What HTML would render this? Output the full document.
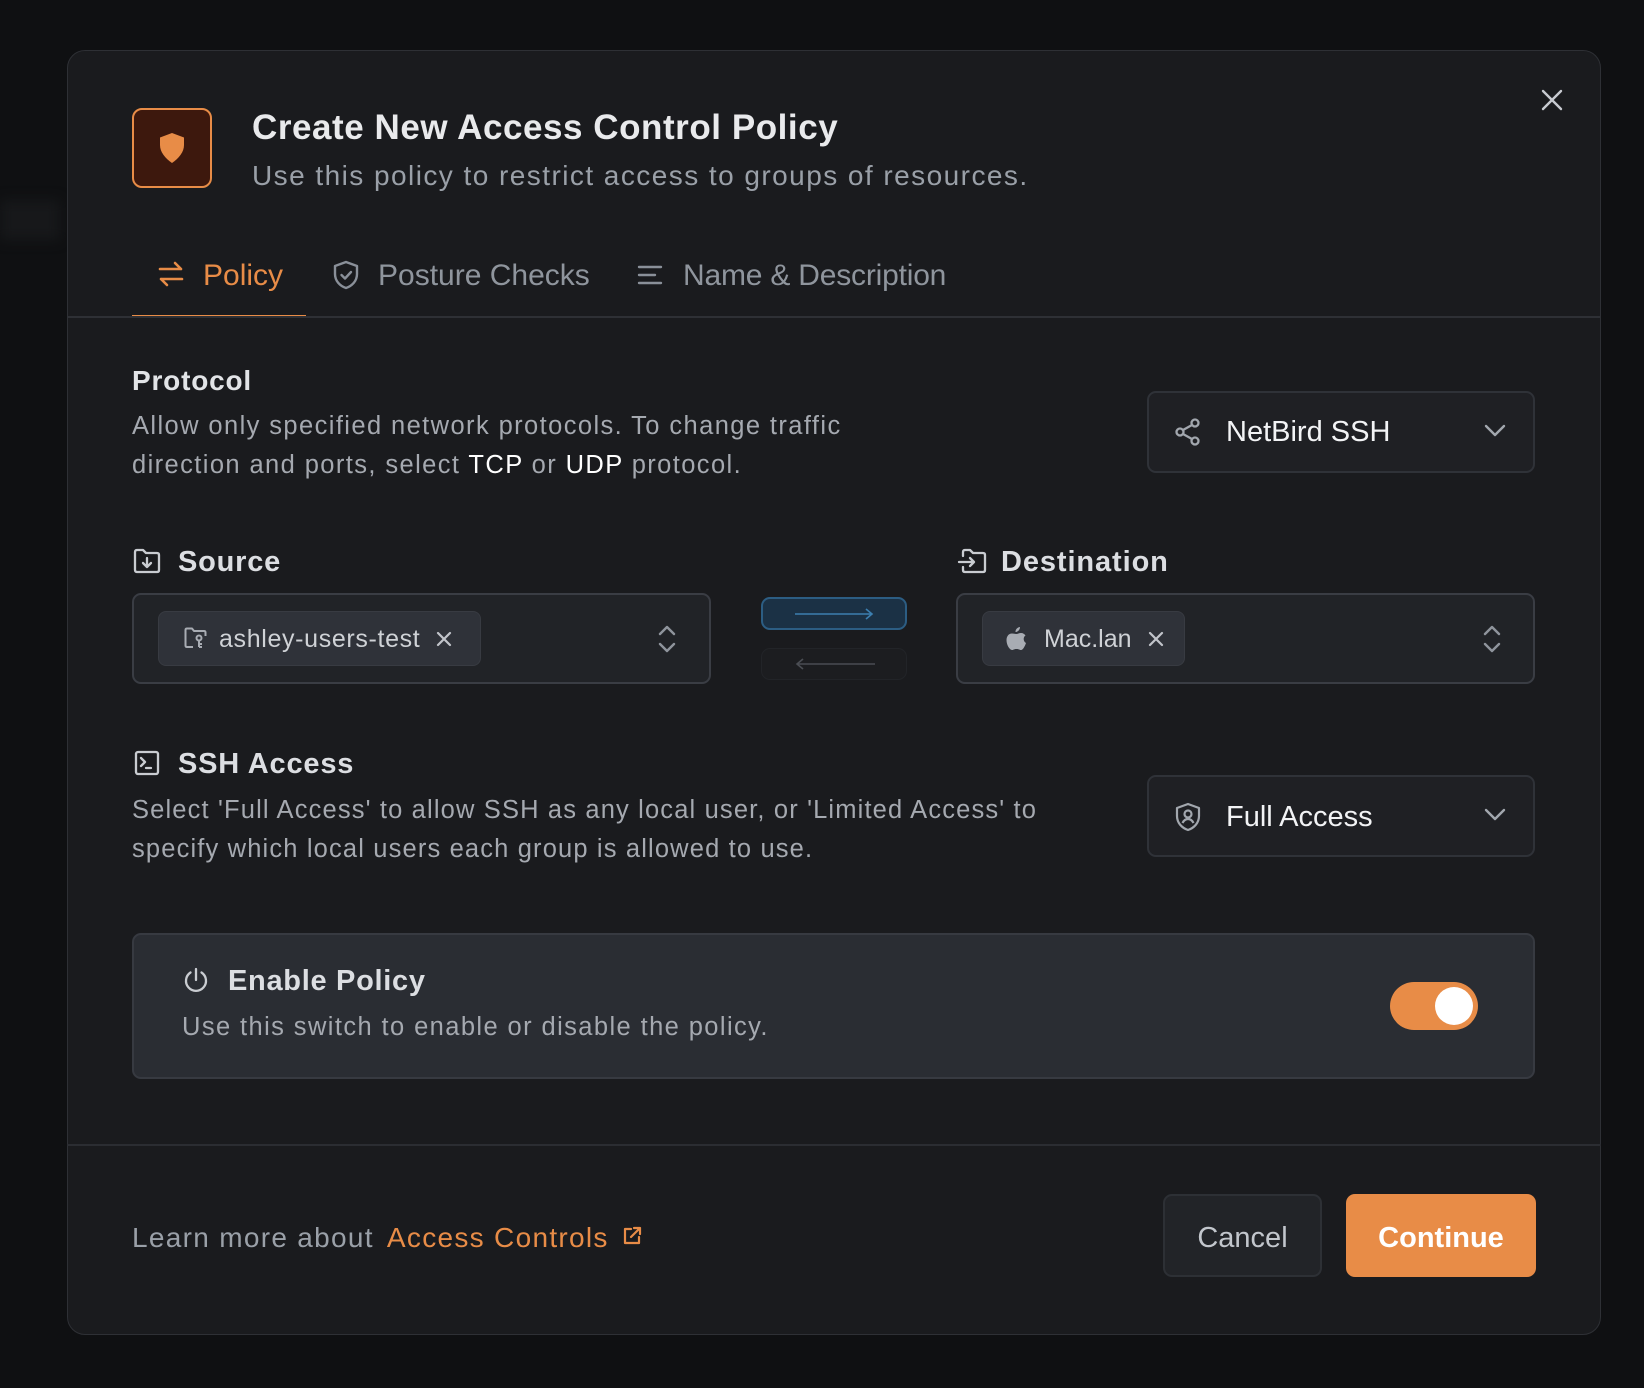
<!DOCTYPE html>
<html><head><meta charset="utf-8"><style>
*{box-sizing:border-box;margin:0;padding:0}
html,body{width:1644px;height:1388px;background:#0f1012;overflow:hidden;font-family:"Liberation Sans",sans-serif}
.abs{position:absolute}
.modal{position:absolute;left:67px;top:50px;width:1534px;height:1285px;background:#1a1b1e;border:1.5px solid #2e3035;border-radius:18px}
.t{position:absolute;white-space:nowrap}
svg{position:absolute;overflow:visible}
.sel{position:absolute;background:#1f2024;border:2px solid #2f3238;border-radius:9px}
.muted{color:#a5a9b0}
</style></head><body>
<div class="abs" style="left:0;top:200px;width:60px;height:40px;background:#17181a;filter:blur(6px)"></div>
<div class="modal"></div>

<svg style="left:1542px;top:90px" width="20" height="20"><path d="M1 1L19 19M19 1L1 19" stroke="#c7cad0" stroke-width="2.4" stroke-linecap="round"/></svg>

<div class="abs" style="left:132px;top:108px;width:80px;height:80px;border:2px solid #e88c47;border-radius:10px;background:#3d180d"></div>
<svg style="left:158px;top:132px" width="28" height="32" viewBox="0 0 28 32"><path d="M14 1L26 5.5V13C26 20 21 26 14 31C7 26 2 20 2 13V5.5Z" fill="#e88c47"/></svg>

<div class="t" style="left:252px;top:108px;font-size:35px;font-weight:bold;color:#e9eaec;letter-spacing:0.55px">Create New Access Control Policy</div>
<div class="t muted" style="left:252px;top:160px;font-size:28px;color:#9aa0a8;letter-spacing:1.45px">Use this policy to restrict access to groups of resources.</div>

<svg style="left:157px;top:260px" width="28" height="28" viewBox="0 0 28 28" fill="none" stroke="#e88c47" stroke-width="2.6" stroke-linecap="round" stroke-linejoin="round"><path d="M3 9H24M18 3L24 9M25 19H4M10 25L4 19"/></svg>
<div class="t" style="left:203px;top:259px;font-size:30px;color:#e88c47">Policy</div>
<div class="abs" style="left:132px;top:315px;width:174px;height:3px;background:#e88c47"></div>
<div class="abs" style="left:67px;top:316px;width:1534px;height:2px;background:#2e3035"></div>
<svg style="left:333px;top:260px" width="26" height="30" viewBox="0 0 26 30" fill="none" stroke="#8a9099" stroke-width="2.4" stroke-linejoin="round" stroke-linecap="round"><path d="M13 2L24 6V14C24 21 19 26 13 28C7 26 2 21 2 14V6Z"/><path d="M8.5 15L12 18.5L18 12"/></svg>
<div class="t" style="left:378px;top:259px;font-size:30px;color:#8f959d">Posture Checks</div>
<svg style="left:637px;top:264px" width="26" height="22" fill="none" stroke="#8a9099" stroke-width="2.4" stroke-linecap="round"><path d="M2 3H24M2 11H18M2 19H24"/></svg>
<div class="t" style="left:683px;top:259px;font-size:30px;color:#8f959d;letter-spacing:-0.2px">Name &amp; Description</div>

<div class="t" style="left:132px;top:365px;font-size:28px;font-weight:bold;color:#e2e4e7;letter-spacing:0.8px">Protocol</div>
<div class="t muted" style="left:132px;top:407px;font-size:25.5px;line-height:39px;letter-spacing:1.4px">Allow only specified network protocols. To change traffic<br>direction and ports, select <span style="color:#fff">TCP</span> or <span style="color:#fff">UDP</span> protocol.</div>
<div class="sel" style="left:1147px;top:391px;width:388px;height:82px"></div>
<svg style="left:1174px;top:418px" width="28" height="28" viewBox="0 0 28 28" fill="none" stroke="#a2a7ae" stroke-width="2.3"><circle cx="21" cy="5" r="3.5"/><circle cx="6" cy="14" r="3.5"/><circle cx="21" cy="23" r="3.5"/><path d="M9 12L18 7M9 16L18 21"/></svg>
<div class="t" style="left:1226px;top:416px;font-size:29px;color:#f2f3f5">NetBird SSH</div>
<svg style="left:1484px;top:424px" width="22" height="14" fill="none" stroke="#a2a7ae" stroke-width="2.4" stroke-linecap="round" stroke-linejoin="round"><path d="M2 2L11 11L20 2"/></svg>

<svg style="left:133px;top:548px" width="28" height="26" viewBox="0 0 28 26" fill="none" stroke="#c9ccd1" stroke-width="2.3" stroke-linejoin="round" stroke-linecap="round"><path d="M2 4C2 2.5 3 2 4 2H10L13 5H24C25.5 5 26 6 26 7V22C26 23.5 25 24 24 24H4C3 24 2 23.5 2 22Z"/><path d="M14 10V19M10 15L14 19L18 15"/></svg>
<div class="t" style="left:178px;top:546px;font-size:29px;font-weight:bold;color:#dcdee2;letter-spacing:0.8px">Source</div>
<div class="sel" style="left:132px;top:593px;width:579px;height:91px;background:#212327;border-color:#3a3d44"></div>
<div class="abs" style="left:158px;top:611px;width:323px;height:55px;background:#2f3239;border:1px solid #383b42;border-radius:8px"></div>
<svg style="left:184px;top:627px" width="24" height="22" viewBox="0 0 24 22" fill="none" stroke="#a8acb3" stroke-width="2" stroke-linejoin="round"><path d="M9 20H3C2 20 1.5 19.5 1.5 18.5V3C1.5 2 2 1.5 3 1.5H8L10 4H20C21 4 21.5 4.5 21.5 5.5V9"/><circle cx="15" cy="11" r="2.5"/><path d="M15 14V20M15 17H18M15 20H18"/></svg>
<div class="t" style="left:219px;top:625px;font-size:25px;color:#cfd2d6;letter-spacing:0.65px">ashley-users-test</div>
<svg style="left:437px;top:632px" width="14" height="14" fill="none" stroke="#c1c4ca" stroke-width="2.2" stroke-linecap="round"><path d="M1 1L13 13M13 1L1 13"/></svg>
<svg style="left:658px;top:625px" width="18" height="28" fill="none" stroke="#8f949c" stroke-width="2.4" stroke-linecap="round" stroke-linejoin="round"><path d="M2 9L9 2L16 9M2 19L9 26L16 19"/></svg>

<div class="abs" style="left:761px;top:597px;width:146px;height:33px;background:#1b3145;border:2px solid #2c5d83;border-radius:9px"></div>
<svg style="left:795px;top:608px" width="80" height="12" fill="none" stroke="#3c7fb0" stroke-width="1.6"><path d="M0 6H77M71 1L77 6L71 11"/></svg>
<div class="abs" style="left:761px;top:648px;width:146px;height:32px;background:#1c1d20;border:1.5px solid #222428;border-radius:9px"></div>
<svg style="left:795px;top:658px" width="80" height="12" fill="none" stroke="#4a4d53" stroke-width="1.6"><path d="M80 6H2M8 1L2 6L8 11"/></svg>

<svg style="left:957px;top:548px" width="30" height="26" viewBox="0 0 30 26" fill="none" stroke="#c9ccd1" stroke-width="2.3" stroke-linejoin="round" stroke-linecap="round"><path d="M6 8V4C6 2.5 7 2 8 2H13L16 5H26C27.5 5 28 6 28 7V22C28 23.5 27 24 26 24H8C7 24 6 23.5 6 22V19"/><path d="M2 14H17M13 10L17 14L13 18"/></svg>
<div class="t" style="left:1001px;top:546px;font-size:29px;font-weight:bold;color:#dcdee2;letter-spacing:0.9px">Destination</div>
<div class="sel" style="left:956px;top:593px;width:579px;height:91px;background:#212327;border-color:#3a3d44"></div>
<div class="abs" style="left:982px;top:611px;width:203px;height:55px;background:#2f3239;border:1px solid #383b42;border-radius:8px"></div>
<svg style="left:1005px;top:626px" width="22" height="26" viewBox="0 0 22 26"><path d="M15 1C15 3.5 13 6 10.5 6C10.3 3.5 12.5 1.2 15 1Z" fill="#a8acb3"/><path d="M11 8C13 8 14 7 16 7C18 7 19.5 8 20.5 9.5C18 11 18 15.5 21 17C20 20 18 24 16 24C14.5 24 14 23 11.5 23C9 23 8.5 24 7 24C5 24 1.5 19.5 1.5 14C1.5 10 4 7.5 7 7.5C9 7.5 10 8 11 8Z" fill="#a8acb3"/></svg>
<div class="t" style="left:1044px;top:625px;font-size:25px;color:#cfd2d6">Mac.lan</div>
<svg style="left:1149px;top:632px" width="14" height="14" fill="none" stroke="#c1c4ca" stroke-width="2.2" stroke-linecap="round"><path d="M1 1L13 13M13 1L1 13"/></svg>
<svg style="left:1483px;top:625px" width="18" height="28" fill="none" stroke="#8f949c" stroke-width="2.4" stroke-linecap="round" stroke-linejoin="round"><path d="M2 9L9 2L16 9M2 19L9 26L16 19"/></svg>

<svg style="left:134px;top:750px" width="26" height="26" fill="none" stroke="#c9ccd1" stroke-width="2.3" stroke-linejoin="round" stroke-linecap="round"><rect x="2" y="2" width="22" height="22" rx="2"/><path d="M7 8L11 12L7 16M12 18H17"/></svg>
<div class="t" style="left:178px;top:748px;font-size:29px;font-weight:bold;color:#dcdee2;letter-spacing:0.8px">SSH Access</div>
<div class="t muted" style="left:132px;top:791px;font-size:25.5px;line-height:39px;letter-spacing:1.15px">Select 'Full Access' to allow SSH as any local user, or 'Limited Access' to<br>specify which local users each group is allowed to use.</div>
<div class="sel" style="left:1147px;top:775px;width:388px;height:82px"></div>
<svg style="left:1175px;top:802px" width="26" height="30" viewBox="0 0 26 30" fill="none" stroke="#a2a7ae" stroke-width="2.2" stroke-linejoin="round"><path d="M13 2L24 6V14C24 21 19 26 13 28C7 26 2 21 2 14V6Z"/><circle cx="13" cy="12" r="3.5"/><path d="M7.5 21C9 18 11 17 13 17C15 17 17 18 18.5 21"/></svg>
<div class="t" style="left:1226px;top:801px;font-size:29px;color:#f2f3f5">Full Access</div>
<svg style="left:1484px;top:808px" width="22" height="14" fill="none" stroke="#a2a7ae" stroke-width="2.4" stroke-linecap="round" stroke-linejoin="round"><path d="M2 2L11 11L20 2"/></svg>

<div class="abs" style="left:132px;top:933px;width:1403px;height:146px;background:#2a2d33;border:2px solid #373a41;border-radius:9px"></div>
<svg style="left:183px;top:967px" width="26" height="28" fill="none" stroke="#c9ccd1" stroke-width="2.3" stroke-linecap="round"><path d="M13 2V13M7.5 5.5A10 10 0 1 0 18.5 5.5"/></svg>
<div class="t" style="left:228px;top:965px;font-size:29px;font-weight:bold;color:#dcdee2;letter-spacing:0.7px">Enable Policy</div>
<div class="t muted" style="left:182px;top:1013px;font-size:25.5px;letter-spacing:1.4px">Use this switch to enable or disable the policy.</div>
<div class="abs" style="left:1390px;top:982px;width:88px;height:48px;background:#e88c47;border-radius:24px"></div>
<div class="abs" style="left:1435px;top:987px;width:38px;height:38px;background:#fff;border-radius:50%"></div>

<div class="abs" style="left:67px;top:1144px;width:1534px;height:2px;background:#2b2d32"></div>
<div class="t" style="left:132px;top:1222px;font-size:28px;color:#9aa0a8;letter-spacing:1.3px">Learn more about <span style="color:#e88c47;margin-left:4px">Access Controls</span></div>
<svg style="left:622px;top:1226px" width="20" height="20" fill="none" stroke="#e88c47" stroke-width="2.2" stroke-linecap="round" stroke-linejoin="round"><path d="M9 3H3V17H17V11M12 2H18V8M18 2L9 11"/></svg>
<div class="abs" style="left:1163px;top:1194px;width:159px;height:83px;background:#222428;border:2px solid #2d3035;border-radius:9px"></div>
<div class="t" style="left:1163px;top:1222px;width:159px;text-align:center;font-size:29px;color:#c2c6cc">Cancel</div>
<div class="abs" style="left:1346px;top:1194px;width:190px;height:83px;background:#e88c47;border-radius:9px"></div>
<div class="t" style="left:1346px;top:1222px;width:190px;text-align:center;font-size:29px;font-weight:bold;color:#fff">Continue</div>
</body></html>
